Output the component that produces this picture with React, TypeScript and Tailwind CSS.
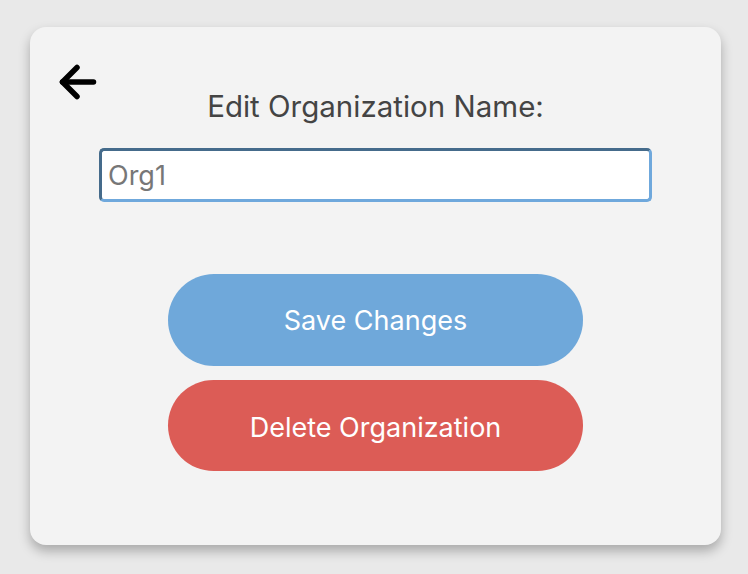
import React, { useState } from 'react';

const BackArrow: React.FC = () => (
  <svg width="42" height="40" viewBox="0 0 42 40" fill="none">
    <path d="M5.5 20 H36.5" stroke="black" strokeWidth="5.5" strokeLinecap="round" />
    <path d="M20 5.5 L5.5 20 L20 34.5" stroke="black" strokeWidth="5.5" strokeLinecap="round" strokeLinejoin="round" />
  </svg>
);

export default function App() {
  const [name, setName] = useState('');

  return (
    <div className="min-h-[574px] w-full bg-[#e9e9e9] pt-[27px] pl-[30px]" style={{ fontFamily: 'Inter, "Noto Sans", sans-serif' }}>
      <div className="relative w-[691px] h-[518px] rounded-2xl bg-[#f3f3f3] shadow-[0_6px_12px_rgba(0,0,0,0.28)] flex flex-col items-center">
        <button className="absolute left-[27px] top-[35px]" aria-label="Back">
          <BackArrow />
        </button>

        <h2 className="mt-[61px] text-[29.5px] leading-[36px] text-[#444444]">Edit Organization Name:</h2>

        <input
          value={name}
          onChange={(e) => setName(e.target.value)}
          placeholder="Org1"
          className="mt-[24px] w-[553px] h-[54px] rounded-[5px] border-[3px] border-t-[#456b8b] border-l-[#456b8b] border-r-[#6fa8dc] border-b-[#6fa8dc] bg-white px-[6px] text-[27px] text-[#333] placeholder:text-[#777777] outline-none"
        />

        <div className="mt-[72px] flex flex-col gap-[14px]">
          <button className="w-[415px] h-[92px] rounded-full bg-[#6fa8da] pt-[2px] text-white text-[27px]">
            Save Changes
          </button>
          <button className="w-[415px] h-[91px] rounded-full bg-[#dc5c56] pt-[5px] text-white text-[27px]">
            Delete Organization
          </button>
        </div>
      </div>
    </div>
  );
}
